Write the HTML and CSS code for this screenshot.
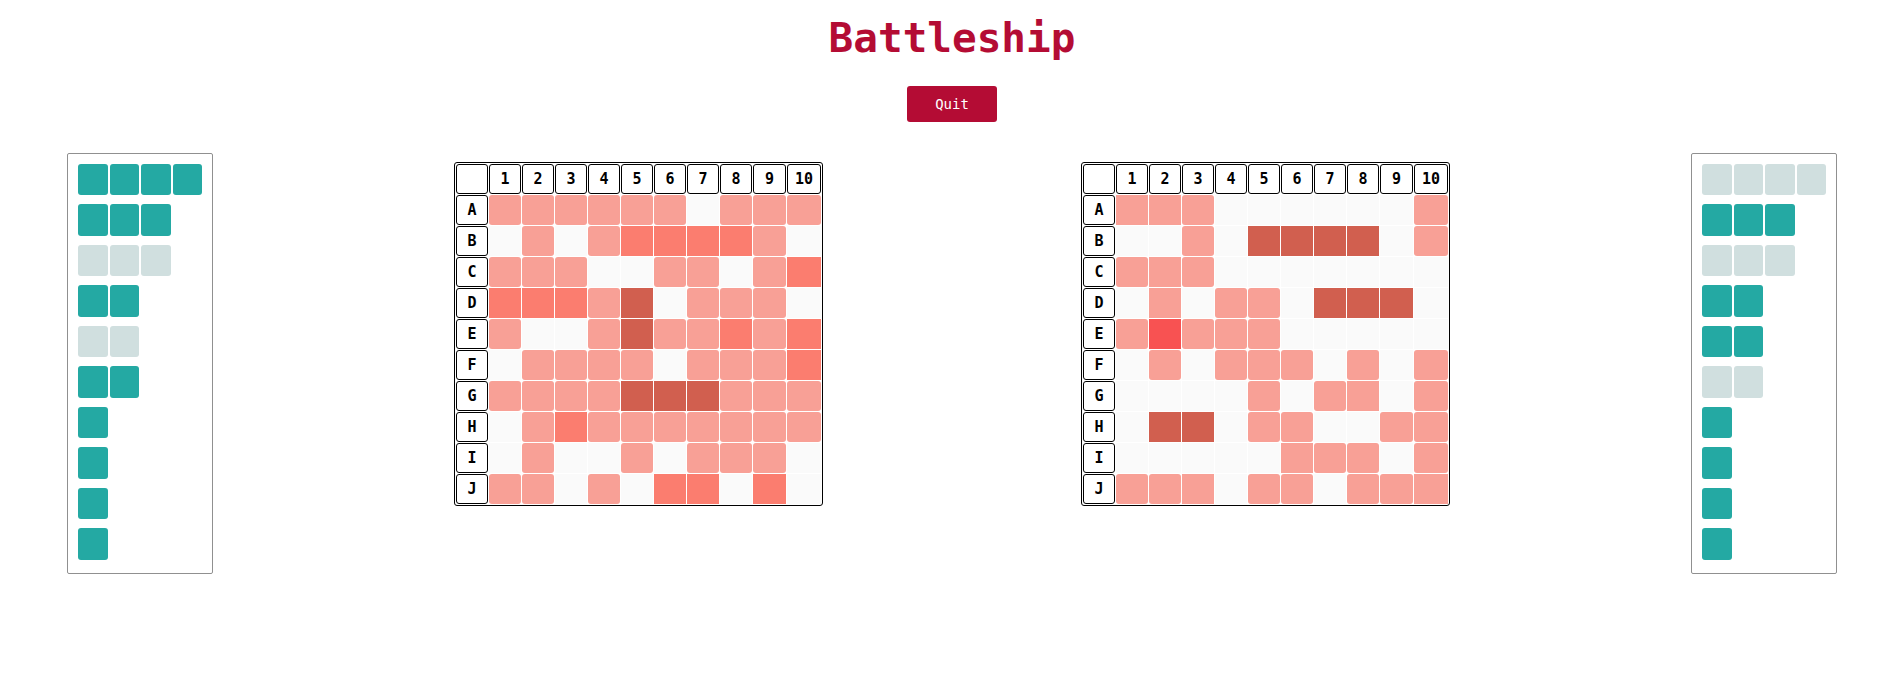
FILE: index.html
```
<!DOCTYPE html>
<html lang="en">
<head>
<meta charset="utf-8">
<title>Battleship</title>
<link rel="stylesheet" href="styles.css">
</head>
<body>
<header class="header">
  <h1 class="title">Battleship</h1>
  <button class="quit" type="button">Quit</button>
</header>
<main class="game">
  <div class="fleet fleet-own" data-fleet="4 3 3x 2 2x 2 1 1 1 1"></div>
  <table class="board board-own" data-rows="mmmmmm.mmm .m.mhhhhm. mmm..mm.mh hhhms.mmm. m..msmmhmh .mmmm.mmmh mmmmsssmmm .mhmmmmmmm .m..m.mmm. mm.m.hh.h."></table>
  <table class="board board-enemy" data-rows="qqm......m ..m.ssss.m mqm....... .q.mm.sss. mfmmm..... .m.mmm.m.m ....m.mq.m .ss.mm..mm .....qmm.m mmq.mm.mmq"></table>
  <div class="fleet fleet-enemy" data-fleet="4x 3 3x 2 2 2x 1 1 1 1"></div>
</main>
<script src="game.js"></script>
</body>
</html>
```
FILE: styles.css
```
* { box-sizing: border-box; }

body {
  margin: 0;
  background: #fff;
  color: #000;
  font-family: Consolas, "DejaVu Sans Mono", monospace;
}

.header {
  display: flex;
  flex-direction: column;
  align-items: center;
  gap: 20px;
  padding-top: 10px;
}

.title {
  margin: 0;
  font-size: 41px;
  line-height: 56px;
  font-weight: 700;
  color: #b40c34;
}

.quit {
  width: 90px;
  height: 36px;
  border: 0;
  border-radius: 3px;
  background: #b40c34;
  color: #fff;
  font-family: inherit;
  font-size: 14px;
  cursor: pointer;
}

.game {
  display: grid;
  grid-template-columns: 146px 14fr 369px 15fr 369px 14fr 146px;
  align-items: start;
  padding: 31px 67px 0;
}

.game > * { grid-row: 1; }
.fleet-own { grid-column: 1; }
.board-own { grid-column: 3; }
.board-enemy { grid-column: 5; }
.fleet-enemy { grid-column: 7; }

.fleet {
  display: flex;
  flex-direction: column;
  gap: 9px;
  padding: 10px 10px 13px;
  border: 1px solid #909090;
  border-radius: 2px;
}

.ship {
  display: grid;
  grid-template-columns: repeat(4, 1fr);
  gap: 2px;
}

.deck {
  aspect-ratio: 15 / 16;
  border-radius: 3px;
  background: #24a9a3;
}

.ship.lost .deck { background: #d0dfdf; }

.board {
  margin-top: 9px;
  width: 369px;
  table-layout: fixed;
  border: 1px solid #000;
  border-radius: 3px;
  border-collapse: separate;
  border-spacing: 1px;
}

.board col { width: 32px; }
.board col:nth-child(10) { width: 33px; }
.board col:nth-child(11) { width: 34px; }

.board th,
.board td {
  height: 30px;
  padding: 0;
}

.board th {
  border: 1px solid #000;
  border-radius: 3px;
  font-size: 15px;
  line-height: 18px;
  font-weight: 700;
  text-align: center;
}

.board td { background: #fafafa; }
.board .miss { background: #f8a096; border-radius: 3px; }
.board .near { background: #f8a096; }
.board .hit { background: #fb7d6f; }
.board .sunk { background: #d15f4f; }
.board .fresh { background: #f85252; }
```
FILE: game.js
```
const kinds = { m: "miss", q: "near", h: "hit", s: "sunk", f: "fresh", ".": "" };

document.querySelectorAll(".board").forEach((board) => {
  const numbers = Array.from({ length: 10 }, (_, i) => `<th scope="col">${i + 1}</th>`).join("");
  const rows = board.dataset.rows.split(" ").map((row, i) =>
    `<tr><th scope="row">${"ABCDEFGHIJ"[i]}</th>${[...row].map((c) => `<td class="${kinds[c]}"></td>`).join("")}</tr>`
  ).join("");
  board.innerHTML = `<colgroup>${"<col>".repeat(11)}</colgroup><thead><tr><th></th>${numbers}</tr></thead><tbody>${rows}</tbody>`;
});

document.querySelectorAll(".fleet").forEach((fleet) => {
  fleet.innerHTML = fleet.dataset.fleet.split(" ").map((ship) =>
    `<div class="ship${ship.endsWith("x") ? " lost" : ""}">${'<span class="deck"></span>'.repeat(parseInt(ship, 10))}</div>`
  ).join("");
});
```
